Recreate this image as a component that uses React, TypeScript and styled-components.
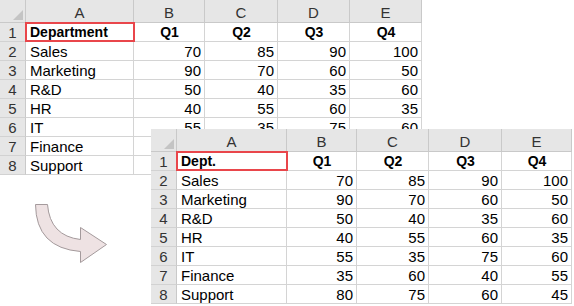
import React from "react";
import styled, { createGlobalStyle, css } from "styled-components";

const GlobalStyle = createGlobalStyle`
  html, body {
    margin: 0;
    padding: 0;
    background: #fff;
  }
  body {
    font-family: "Liberation Sans", Arial, sans-serif;
  }
`;

type Row = [string, number, number, number, number];

const rows: Row[] = [
  ["Sales", 70, 85, 90, 100],
  ["Marketing", 90, 70, 60, 50],
  ["R&D", 50, 40, 35, 60],
  ["HR", 40, 55, 60, 35],
  ["IT", 55, 35, 75, 60],
  ["Finance", 35, 60, 40, 55],
  ["Support", 80, 75, 60, 45],
];

const letters = ["A", "B", "C", "D", "E"];
const quarters = ["Q1", "Q2", "Q3", "Q4"];

const Canvas = styled.div`
  position: relative;
  width: 574px;
  height: 306px;
  overflow: hidden;
  background: #fff;
`;

const Sheet = styled.div<{ $cols: string }>`
  display: grid;
  grid-template-columns: ${(p) => p.$cols};
  grid-template-rows: 23px repeat(8, 19px);
  width: max-content;
  background: #fff;
  color: #000;
`;

const FrontSheet = styled(Sheet)`
  position: absolute;
  left: 151px;
  top: 129px;
`;

const headBase = css`
  box-sizing: border-box;
  background: #e6e6e6;
  color: #333;
  font-size: 15px;
  display: flex;
  align-items: center;
  justify-content: center;
  border-right: 1px solid #c9c9c9;
  border-bottom: 1px solid #c9c9c9;
`;

const Corner = styled.div`
  ${headBase};
  position: relative;

  &::after {
    content: "";
    position: absolute;
    right: 2px;
    bottom: 2px;
    width: 10px;
    height: 10px;
    background: #c4c4c4;
    clip-path: polygon(100% 0, 100% 100%, 0 100%);
  }
`;

const ColHead = styled.div`
  ${headBase};
  padding-top: 2px;
`;

const RowHead = styled.div`
  ${headBase};
  border-bottom-color: #d2d2d2;
`;

const Cell = styled.div<{ $align?: "left" | "right" | "center"; $bold?: boolean }>`
  box-sizing: border-box;
  display: flex;
  align-items: center;
  justify-content: ${(p) =>
    p.$align === "right" ? "flex-end" : p.$align === "center" ? "center" : "flex-start"};
  padding: 0 3px 0 4px;
  font-size: ${(p) => (p.$bold ? "14px" : "15px")};
  font-weight: ${(p) => (p.$bold ? 700 : 400)};
  border-right: 1px solid #d4d4d4;
  border-bottom: 1px solid #d4d4d4;
  white-space: nowrap;
  overflow: hidden;
`;

const Selected = styled(Cell)`
  position: relative;
  overflow: visible;

  &::after {
    content: "";
    position: absolute;
    left: -1px;
    top: -1px;
    right: -2px;
    bottom: -1px;
    border: 2px solid #e9464b;
  }
`;

const ArrowMark = styled.svg`
  position: absolute;
  left: 30px;
  top: 198px;
`;

const Spreadsheet = ({
  title,
  as: Wrapper,
  cols,
}: {
  title: string;
  as: typeof Sheet;
  cols: string;
}) => (
  <Wrapper $cols={cols}>
    <Corner />
    {letters.map((l) => (
      <ColHead key={l}>{l}</ColHead>
    ))}
    <RowHead>1</RowHead>
    <Selected $bold>{title}</Selected>
    {quarters.map((q) => (
      <Cell key={q} $bold $align="center">
        {q}
      </Cell>
    ))}
    {rows.map((r, i) => (
      <React.Fragment key={r[0]}>
        <RowHead>{i + 2}</RowHead>
        <Cell>{r[0]}</Cell>
        {r.slice(1).map((v, j) => (
          <Cell key={j} $align="right">
            {v}
          </Cell>
        ))}
      </React.Fragment>
    ))}
  </Wrapper>
);

const CurvedArrow = () => (
  <ArrowMark width="84" height="72" viewBox="30 198 84 72">
    <path
      d="M35.5,204.5 L47.5,204.5 Q50,236 80.5,239.5 L80.5,227.5 L106.5,244.5 L80.5,262.5 L80.5,251.5 Q36,248 35.5,204.5 Z"
      fill="#eee2e3"
      stroke="#a49a9c"
      strokeWidth="1"
      strokeLinejoin="round"
    />
  </ArrowMark>
);

export default function App() {
  return (
    <Canvas>
      <GlobalStyle />
      <Spreadsheet title="Department" as={Sheet} cols="26px 108px 71px 73px 72px 72px" />
      <CurvedArrow />
      <Spreadsheet title="Dept." as={FrontSheet} cols="26px 110px 70px 72px 73px 70px" />
    </Canvas>
  );
}
